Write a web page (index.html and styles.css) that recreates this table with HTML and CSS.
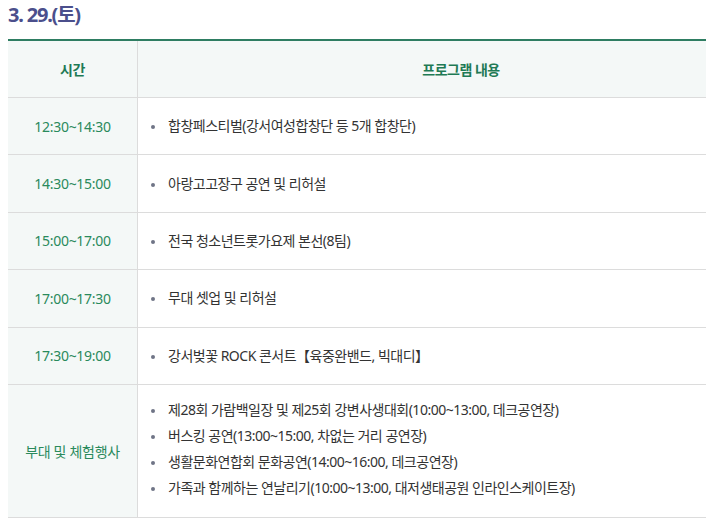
FILE: index.html
```html
<!DOCTYPE html>
<html lang="ko">
<head>
<meta charset="utf-8">
<link rel="stylesheet" href="styles.css">
</head>
<body>
<h3 class="day-title">3. 29.(토)</h3>
<table class="schedule">
  <thead>
    <tr>
      <th class="col-time">시간</th>
      <th class="col-prog">프로그램 내용</th>
    </tr>
  </thead>
  <tbody>
    <tr>
      <td class="time">12:30~14:30</td>
      <td class="prog"><ul><li>합창페스티벌(강서여성합창단 등 5개 합창단)</li></ul></td>
    </tr>
    <tr>
      <td class="time">14:30~15:00</td>
      <td class="prog"><ul><li>아랑고고장구 공연 및 리허설</li></ul></td>
    </tr>
    <tr>
      <td class="time">15:00~17:00</td>
      <td class="prog"><ul><li>전국 청소년트롯가요제 본선(8팀)</li></ul></td>
    </tr>
    <tr>
      <td class="time">17:00~17:30</td>
      <td class="prog"><ul><li>무대 셋업 및 리허설</li></ul></td>
    </tr>
    <tr>
      <td class="time">17:30~19:00</td>
      <td class="prog"><ul><li>강서벚꽃 ROCK 콘서트【육중완밴드, 빅대디】</li></ul></td>
    </tr>
    <tr class="tall">
      <td class="time">부대 및 체험행사</td>
      <td class="prog">
        <ul>
          <li>제28회 가람백일장 및 제25회 강변사생대회(10:00~13:00, 데크공연장)</li>
          <li>버스킹 공연(13:00~15:00, 차없는 거리 공연장)</li>
          <li>생활문화연합회 문화공연(14:00~16:00, 데크공연장)</li>
          <li>가족과 함께하는 연날리기(10:00~13:00, 대저생태공원 인라인스케이트장)</li>
        </ul>
      </td>
    </tr>
  </tbody>
</table>
</body>
</html>
```

FILE: styles.css
```css
body {
  margin: 0 8px;
  background: #fff;
  font-family: "Noto Sans", "Noto Sans CJK KR", sans-serif;
  color: #333;
}
.day-title {
  margin: 0;
  padding-top: 2px;
  height: 37px;
  font-size: 20px;
  font-weight: 700;
  color: #4b4f8c;
  letter-spacing: -1.2px;
  line-height: 26px;
}
.schedule {
  width: 698px;
  border-collapse: collapse;
  border-top: 2px solid #2e7d62;
  border-bottom: 1px solid #e0e0e0;
  table-layout: fixed;
}
.schedule th {
  background: #f4f8f7;
  color: #1f7a55;
  font-size: 14px;
  font-weight: 700;
  height: 56px;
  padding: 0;
  border-bottom: 1px solid #dcdcdc;
  letter-spacing: -0.5px;
}
.schedule .col-time {
  width: 129px;
  border-right: 1px solid #dcdcdc;
}
.schedule .col-prog {
  padding-left: 78px;
}
.schedule td {
  border-bottom: 1px solid #dcdcdc;
  height: 56.4px;
  padding: 0;
}
.time {
  background: #f4f8f7;
  border-right: 1px solid #dcdcdc;
  color: #2a8a5c;
  font-size: 14px;
  text-align: center;
  letter-spacing: -0.3px;
}
.prog ul {
  margin: 0;
  padding: 0 0 0 13px;
  list-style: none;
}
.prog li {
  position: relative;
  padding-left: 17px;
  font-size: 14px;
  line-height: 26px;
  letter-spacing: -0.5px;
  color: #333;
}
.prog li::before {
  content: "";
  position: absolute;
  left: 0;
  top: 12px;
  width: 4px;
  height: 4px;
  border-radius: 50%;
  background: #6f7486;
}
.schedule .tall td {
  height: 132px;
}
.tall .prog ul {
  padding-bottom: 3px;
}
```
